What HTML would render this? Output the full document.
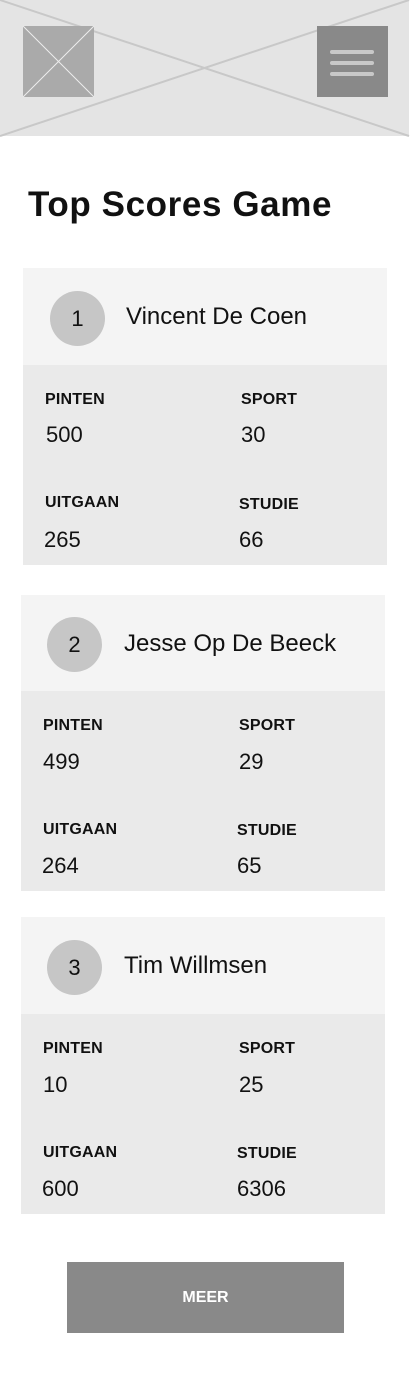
<!DOCTYPE html>
<html><head><meta charset="utf-8"><style>
*{margin:0;padding:0;box-sizing:border-box}
body{width:411px;height:1387px;background:#fff;position:relative;overflow:hidden;font-family:"Liberation Sans",sans-serif;color:#111}
.a{position:absolute}
.t{position:absolute;height:30px;line-height:30px;white-space:nowrap}
.lb{font-weight:bold;font-size:16px;letter-spacing:0.2px}
.v{font-size:22px}
.nm{font-size:24px}
.circ{position:absolute;width:55px;height:55px;border-radius:50%;background:#c6c6c6;text-align:center;line-height:55px;font-size:22px}
</style></head><body>
<svg class="a" style="left:0;top:0" width="411" height="137">
<rect x="0" y="0" width="409" height="136" fill="#e4e4e4"/>
<line x1="0" y1="0" x2="409" y2="136" stroke="#c8c8c8" stroke-width="2"/>
<line x1="0" y1="136" x2="409" y2="0" stroke="#c8c8c8" stroke-width="2"/>
<rect x="23" y="26" width="71" height="71" fill="#aaa"/>
<line x1="23" y1="26" x2="94" y2="97" stroke="#eee" stroke-width="1"/>
<line x1="23" y1="97" x2="94" y2="26" stroke="#eee" stroke-width="1"/>
<rect x="317" y="26" width="71" height="71" fill="#898989"/>
<rect x="330" y="50" width="44" height="4" rx="2" fill="#c8c8c8"/>
<rect x="330" y="61" width="44" height="4" rx="2" fill="#c8c8c8"/>
<rect x="330" y="72" width="44" height="4" rx="2" fill="#c8c8c8"/>
</svg>
<div class="t" style="left:28px;top:184px;height:42px;line-height:42px;font-size:35px;font-weight:bold;letter-spacing:0.6px">Top Scores Game</div>

<div class="a" style="left:23px;top:268px;width:364px;height:97px;background:#f4f4f4"></div>
<div class="a" style="left:23px;top:365px;width:364px;height:200px;background:#eaeaea"></div>
<div class="circ" style="left:50px;top:291px">1</div>
<div class="t nm" style="left:126px;top:302px">Vincent De Coen</div>
<div class="t lb" style="left:45px;top:385px">PINTEN</div>
<div class="t lb" style="left:241px;top:385px">SPORT</div>
<div class="t v" style="left:46px;top:420px">500</div>
<div class="t v" style="left:241px;top:420px">30</div>
<div class="t lb" style="left:45px;top:488px">UITGAAN</div>
<div class="t lb" style="left:239px;top:490px">STUDIE</div>
<div class="t v" style="left:44px;top:525px">265</div>
<div class="t v" style="left:239px;top:525px">66</div>

<div class="a" style="left:21px;top:595px;width:364px;height:96px;background:#f4f4f4"></div>
<div class="a" style="left:21px;top:691px;width:364px;height:200px;background:#eaeaea"></div>
<div class="circ" style="left:47px;top:617px">2</div>
<div class="t nm" style="left:124px;top:629px">Jesse Op De Beeck</div>
<div class="t lb" style="left:43px;top:711px">PINTEN</div>
<div class="t lb" style="left:239px;top:711px">SPORT</div>
<div class="t v" style="left:43px;top:747px">499</div>
<div class="t v" style="left:239px;top:747px">29</div>
<div class="t lb" style="left:43px;top:815px">UITGAAN</div>
<div class="t lb" style="left:237px;top:816px">STUDIE</div>
<div class="t v" style="left:42px;top:851px">264</div>
<div class="t v" style="left:237px;top:851px">65</div>

<div class="a" style="left:21px;top:917px;width:364px;height:97px;background:#f4f4f4"></div>
<div class="a" style="left:21px;top:1014px;width:364px;height:200px;background:#eaeaea"></div>
<div class="circ" style="left:47px;top:940px">3</div>
<div class="t nm" style="left:124px;top:951px">Tim Willmsen</div>
<div class="t lb" style="left:43px;top:1034px">PINTEN</div>
<div class="t lb" style="left:239px;top:1034px">SPORT</div>
<div class="t v" style="left:43px;top:1070px">10</div>
<div class="t v" style="left:239px;top:1070px">25</div>
<div class="t lb" style="left:43px;top:1138px">UITGAAN</div>
<div class="t lb" style="left:237px;top:1139px">STUDIE</div>
<div class="t v" style="left:42px;top:1174px">600</div>
<div class="t v" style="left:237px;top:1174px">6306</div>

<div class="a" style="left:67px;top:1262px;width:277px;height:71px;background:#898989;color:#fff;font-weight:bold;font-size:16px;text-align:center;line-height:71px">MEER</div>
</body></html>
